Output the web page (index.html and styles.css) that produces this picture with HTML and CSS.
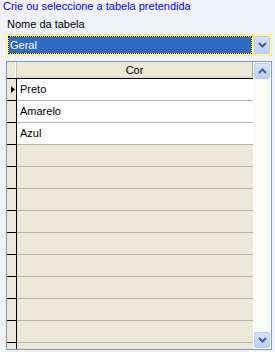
FILE: index.html
```html
<!DOCTYPE html>
<html>
<head>
<meta charset="utf-8">
<link rel="stylesheet" href="styles.css">
</head>
<body>
<div class="title">Crie ou seleccione a tabela pretendida</div>
<div class="label">Nome da tabela</div>
<div class="combo">
  <div class="combo-field"><div class="combo-sel">Geral</div></div>
  <div class="combo-btn"><svg width="9" height="6" viewBox="0 0 9 6"><polyline points="1,1 4.5,4.5 8,1" fill="none" stroke="#4d6185" stroke-width="2"/></svg></div>
</div>
<div class="grid">
  <div class="sheet">
    <div class="hdr"><div class="hsel"></div><div class="hcol">Cor</div></div>
    <div class="row"><div class="rsel"><svg width="4" height="7" viewBox="0 0 4 7"><polygon points="0,0 4,3.5 0,7" fill="#000"/></svg></div><div class="cell">Preto</div></div>
    <div class="row"><div class="rsel"></div><div class="cell">Amarelo</div></div>
    <div class="row"><div class="rsel"></div><div class="cell">Azul</div></div>
    <div class="row"><div class="rsel"></div><div class="cell empty"></div></div>
    <div class="row"><div class="rsel"></div><div class="cell empty"></div></div>
    <div class="row"><div class="rsel"></div><div class="cell empty"></div></div>
    <div class="row"><div class="rsel"></div><div class="cell empty"></div></div>
    <div class="row"><div class="rsel"></div><div class="cell empty"></div></div>
    <div class="row"><div class="rsel"></div><div class="cell empty"></div></div>
    <div class="row"><div class="rsel"></div><div class="cell empty"></div></div>
    <div class="row"><div class="rsel"></div><div class="cell empty"></div></div>
    <div class="row"><div class="rsel"></div><div class="cell empty"></div></div>
    <div class="row"><div class="rsel"></div><div class="cell empty"></div></div>
  </div>
  <div class="vscroll">
    <div class="sbtn"><svg width="9" height="6" viewBox="0 0 9 6"><polyline points="1,5 4.5,1.5 8,5" fill="none" stroke="#4d6185" stroke-width="2"/></svg></div>
    <div class="track"></div>
    <div class="sbtn"><svg width="9" height="6" viewBox="0 0 9 6"><polyline points="1,1 4.5,4.5 8,1" fill="none" stroke="#4d6185" stroke-width="2"/></svg></div>
  </div>
</div>
</body>
</html>
```

FILE: styles.css
```css
html, body {
  margin: 0;
  padding: 0;
}
body {
  background: #f2f2fb;
  font-family: "Liberation Sans", Arial, sans-serif;
  font-size: 11px;
  color: #000;
  width: 275px;
  height: 352px;
  overflow: hidden;
}
.title {
  color: #0505f0;
  line-height: 13px;
  padding: 0 0 0 3px;
  height: 15px;
}
.label {
  line-height: 13px;
  padding: 3px 0 0 7px;
  height: 16px;
}
.combo {
  margin-left: 6px;
  width: 266px;
  height: 22px;
  box-sizing: border-box;
  border: 1px solid #f6eea0;
  background: #ffff9c;
  padding: 1px;
  display: flex;
  gap: 2px;
}
.combo-field {
  flex: 1;
  background: #ffff60;
}
.combo-sel {
  height: 100%;
  box-sizing: border-box;
  border: 1px dotted #000;
  background: #316ac5;
  background-clip: padding-box;
  color: #fff;
  line-height: 16px;
  padding-left: 1px;
}
.combo-btn {
  width: 16px;
  box-sizing: border-box;
  border: 1px solid #b7cbf5;
  border-radius: 2px;
  background: linear-gradient(#d5e2fd, #bccffb);
  display: flex;
  align-items: center;
  justify-content: center;
}
.grid {
  margin: 5px 0 0 6px;
  width: 266px;
  height: 289px;
  box-sizing: border-box;
  border: 1px solid #7f9db9;
  display: flex;
  overflow: hidden;
}
.sheet {
  width: 246px;
  background: #ece9d8;
  overflow: hidden;
}
.hdr {
  display: flex;
  height: 16px;
  border-bottom: 1px solid #000;
  background: #ece9d8;
}
.hsel {
  width: 9px;
  border-right: 1px solid #c8c5b4;
  box-shadow: inset -1px 0 #fff;
}
.hcol {
  flex: 1;
  text-align: center;
  line-height: 16px;
  border-right: 1px solid #aca899;
  box-shadow: inset 0 -2px #e2decd;
}
.row {
  display: flex;
  height: 22px;
}
.rsel {
  box-sizing: border-box;
  width: 10px;
  border-right: 1px solid #000;
  border-bottom: 1px solid #000;
  display: flex;
  align-items: center;
  padding-left: 4px;
}
.cell {
  flex: 1;
  background: #fff;
  border-bottom: 1px solid #b4b4b4;
  padding-left: 3px;
  line-height: 21px;
}
.cell.empty {
  background: #ece9d8;
}
.vscroll {
  flex: 1;
  background: #fbfbf8;
  display: flex;
  flex-direction: column;
  padding: 1px;
}
.track {
  flex: 1;
}
.sbtn {
  height: 16px;
  box-sizing: border-box;
  border: 1px solid #b7cbf5;
  border-radius: 2px;
  background: linear-gradient(#d5e2fd, #bccffb);
  display: flex;
  align-items: center;
  justify-content: center;
}
```
